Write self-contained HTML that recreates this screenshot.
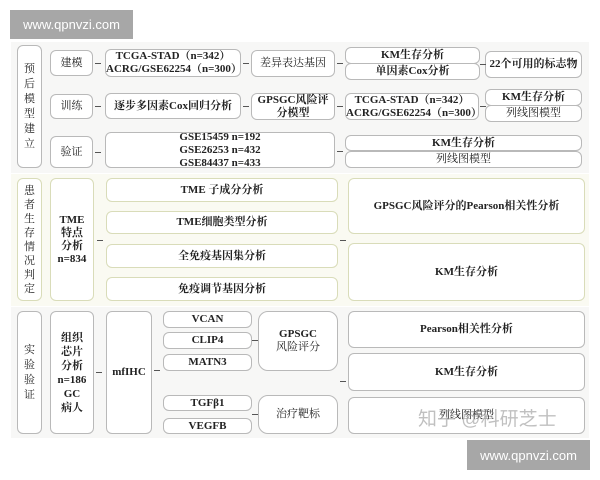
<!DOCTYPE html>
<html><head><meta charset="utf-8"><style>
*{margin:0;padding:0;box-sizing:border-box}
body{width:600px;height:480px;background:#fff;position:relative;overflow:hidden;font-family:"Liberation Serif","Noto Serif CJK SC",serif;font-weight:bold;color:#222}
.p{position:absolute}
.b{position:absolute;background:#fff;border:1px solid #b9b9b9;border-radius:6px;display:flex;flex-direction:column;align-items:center;justify-content:center;text-align:center;font-size:11px;line-height:13px}
.y{border-color:#d9dcb9}
.n{font-weight:normal}
.a{position:absolute;height:1px;background:#555;width:6px}
.wm{position:absolute;background:#a7a7a7;color:#fff;font-family:"Liberation Sans","DejaVu Sans",sans-serif;font-weight:normal;font-size:13px;display:flex;align-items:center;justify-content:center}
</style></head><body>
<div class="p" style="left:11px;top:42px;width:578px;height:131px;background:#f7f7f6"></div>
<div class="p" style="left:11px;top:174px;width:578px;height:132px;background:#fafaf2"></div>
<div class="p" style="left:11px;top:307px;width:578px;height:131px;background:#f7f7f6"></div>

<div class="wm" style="left:10px;top:10px;width:123px;height:29px">www.qpnvzi.com</div>

<!-- section 1 -->
<div class="b n" style="left:17px;top:45px;width:25px;height:123px;line-height:15px">预<br>后<br>模<br>型<br>建<br>立</div>
<div class="b n" style="left:50px;top:50px;width:43px;height:26px">建模</div>
<div class="b" style="left:105px;top:49px;width:136px;height:28px">TCGA-STAD（n=342）<br>ACRG/GSE62254（n=300）</div>
<div class="b n" style="left:251px;top:50px;width:84px;height:27px">差异表达基因</div>
<div class="b" style="left:345px;top:47px;width:135px;height:17px">KM生存分析</div>
<div class="b" style="left:345px;top:63px;width:135px;height:17px">单因素Cox分析</div>
<div class="b" style="left:485px;top:51px;width:97px;height:27px">22个可用的标志物</div>

<div class="b n" style="left:50px;top:94px;width:43px;height:25px">训练</div>
<div class="b" style="left:105px;top:93px;width:136px;height:26px">逐步多因素Cox回归分析</div>
<div class="b" style="left:251px;top:93px;width:84px;height:27px">GPSGC风险评<br>分模型</div>
<div class="b" style="left:345px;top:93px;width:134px;height:27px">TCGA-STAD（n=342）<br>ACRG/GSE62254（n=300）</div>
<div class="b" style="left:485px;top:89px;width:97px;height:17px">KM生存分析</div>
<div class="b n" style="left:485px;top:105px;width:97px;height:17px">列线图模型</div>

<div class="b n" style="left:50px;top:136px;width:43px;height:32px">验证</div>
<div class="b" style="left:105px;top:132px;width:230px;height:36px">GSE15459 n=192<br>GSE26253 n=432<br>GSE84437 n=433</div>
<div class="b" style="left:345px;top:135px;width:237px;height:16px">KM生存分析</div>
<div class="b n" style="left:345px;top:151px;width:237px;height:17px">列线图模型</div>

<div class="a" style="left:95px;top:63px"></div>
<div class="a" style="left:243px;top:63px"></div>
<div class="a" style="left:337px;top:63px"></div>
<div class="a" style="left:480px;top:64px"></div>
<div class="a" style="left:95px;top:106px"></div>
<div class="a" style="left:243px;top:106px"></div>
<div class="a" style="left:337px;top:106px"></div>
<div class="a" style="left:480px;top:106px"></div>
<div class="a" style="left:95px;top:152px"></div>
<div class="a" style="left:337px;top:151px"></div>

<!-- section 2 -->
<div class="b y n" style="left:17px;top:178px;width:25px;height:123px;line-height:14px">患<br>者<br>生<br>存<br>情<br>况<br>判<br>定</div>
<div class="b y" style="left:50px;top:178px;width:44px;height:123px">TME<br>特点<br>分析<br>n=834</div>
<div class="b y" style="left:106px;top:178px;width:232px;height:24px">TME 子成分分析</div>
<div class="b y" style="left:106px;top:211px;width:232px;height:23px">TME细胞类型分析</div>
<div class="b y" style="left:106px;top:244px;width:232px;height:24px">全免疫基因集分析</div>
<div class="b y" style="left:106px;top:277px;width:232px;height:24px">免疫调节基因分析</div>
<div class="b y" style="left:348px;top:178px;width:237px;height:56px">GPSGC风险评分的Pearson相关性分析</div>
<div class="b y" style="left:348px;top:243px;width:237px;height:58px">KM生存分析</div>
<div class="a" style="left:97px;top:240px"></div>
<div class="a" style="left:340px;top:240px"></div>

<!-- section 3 -->
<div class="b n" style="left:17px;top:311px;width:25px;height:123px;line-height:15px">实<br>验<br>验<br>证</div>
<div class="b" style="left:50px;top:311px;width:44px;height:123px;line-height:14px">组织<br>芯片<br>分析<br>n=186<br>GC<br>病人</div>
<div class="b" style="left:106px;top:311px;width:46px;height:123px">mfIHC</div>
<div class="b" style="left:163px;top:311px;width:89px;height:17px">VCAN</div>
<div class="b" style="left:163px;top:332px;width:89px;height:17px">CLIP4</div>
<div class="b" style="left:163px;top:354px;width:89px;height:17px">MATN3</div>
<div class="b" style="left:163px;top:395px;width:89px;height:16px">TGFβ1</div>
<div class="b" style="left:163px;top:418px;width:89px;height:16px">VEGFB</div>
<div class="b" style="left:258px;top:311px;width:80px;height:60px;border-radius:10px">GPSGC<br><span class="n">风险评分</span></div>
<div class="b n" style="left:258px;top:395px;width:80px;height:39px;border-radius:10px">治疗靶标</div>
<div class="b" style="left:348px;top:311px;width:237px;height:37px">Pearson相关性分析</div>
<div class="b" style="left:348px;top:353px;width:237px;height:38px">KM生存分析</div>
<div class="b n" style="left:348px;top:397px;width:237px;height:37px">列线图模型</div>
<div class="p n" style="left:418px;top:404px;font-family:'Liberation Sans','Noto Sans CJK SC',sans-serif;font-size:19px;color:rgba(150,150,150,0.6)">知乎 @科研芝士</div>
<div class="a" style="left:96px;top:372px"></div>
<div class="a" style="left:154px;top:370px"></div>
<div class="a" style="left:252px;top:340px"></div>
<div class="a" style="left:252px;top:414px"></div>
<div class="a" style="left:340px;top:381px"></div>

<div class="wm" style="left:467px;top:440px;width:123px;height:30px">www.qpnvzi.com</div>
</body></html>
